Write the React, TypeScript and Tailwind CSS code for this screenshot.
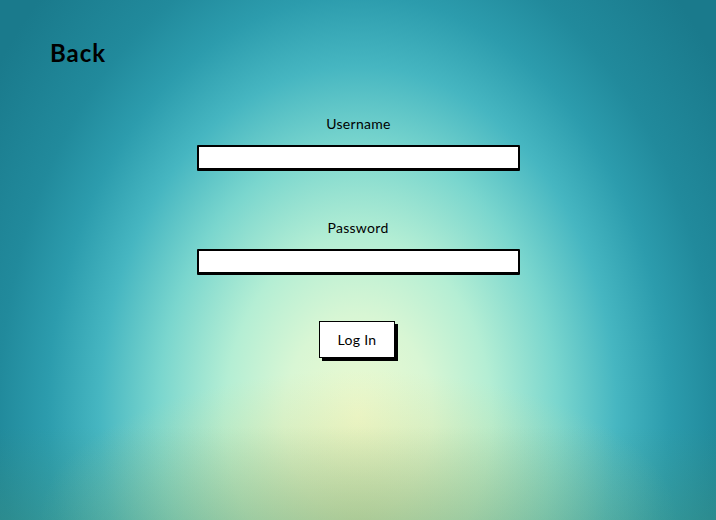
import React from "react";

export default function App() {
  return (
    <div
      className="relative w-[716px] h-[520px] overflow-hidden bg-[radial-gradient(ellipse_370px_500px_at_50%_80%,#eefad0_0%,#d8f6d4_20%,#b4eed4_36%,#7ad6ce_54%,#46b6c1_70%,#2c9cad_84%,#218a9c_97%,#1a7a8c_120%)] text-black"
      style={{ fontFamily: "Lato, 'Noto Sans', sans-serif" }}
    >
      <div className="absolute inset-0 bg-[radial-gradient(ellipse_320px_150px_at_50%_100%,rgba(215,215,135,0.6)_0%,rgba(215,215,135,0)_100%)]" />
      <div className="absolute inset-0 bg-[linear-gradient(to_top,rgba(70,145,115,0.3)_0%,rgba(70,145,115,0)_18%)]" />
      <div className="relative flex flex-col">
        <div className="pl-[50px] pt-[38px] h-[100px]">
          <span className="text-[24px] font-bold leading-[30px] tracking-[1px]">Back</span>
        </div>
        <div className="flex flex-col items-center">
          <div className="text-[14px] leading-[16px] mt-[16px] ml-[1px] tracking-[0.3px]">Username</div>
          <div className="mt-[13px] w-[323px] h-[26px] bg-white border-2 border-black border-b-[3px] border-r-[2.5px] rounded-[1px]" />
          <div className="text-[14px] leading-[16px] mt-[49px] tracking-[0.3px]">Password</div>
          <div className="mt-[13px] w-[323px] h-[26px] bg-white border-2 border-black border-b-[3px] border-r-[2.5px] rounded-[1px]" />
          <div className="mt-[46px] w-[76px] h-[37px] bg-white border-[1.5px] border-black shadow-[3px_3px_0_#000] flex items-center justify-center text-[14px] tracking-[0.3px] -ml-[2px]">
            Log In
          </div>
        </div>
      </div>
    </div>
  );
}
